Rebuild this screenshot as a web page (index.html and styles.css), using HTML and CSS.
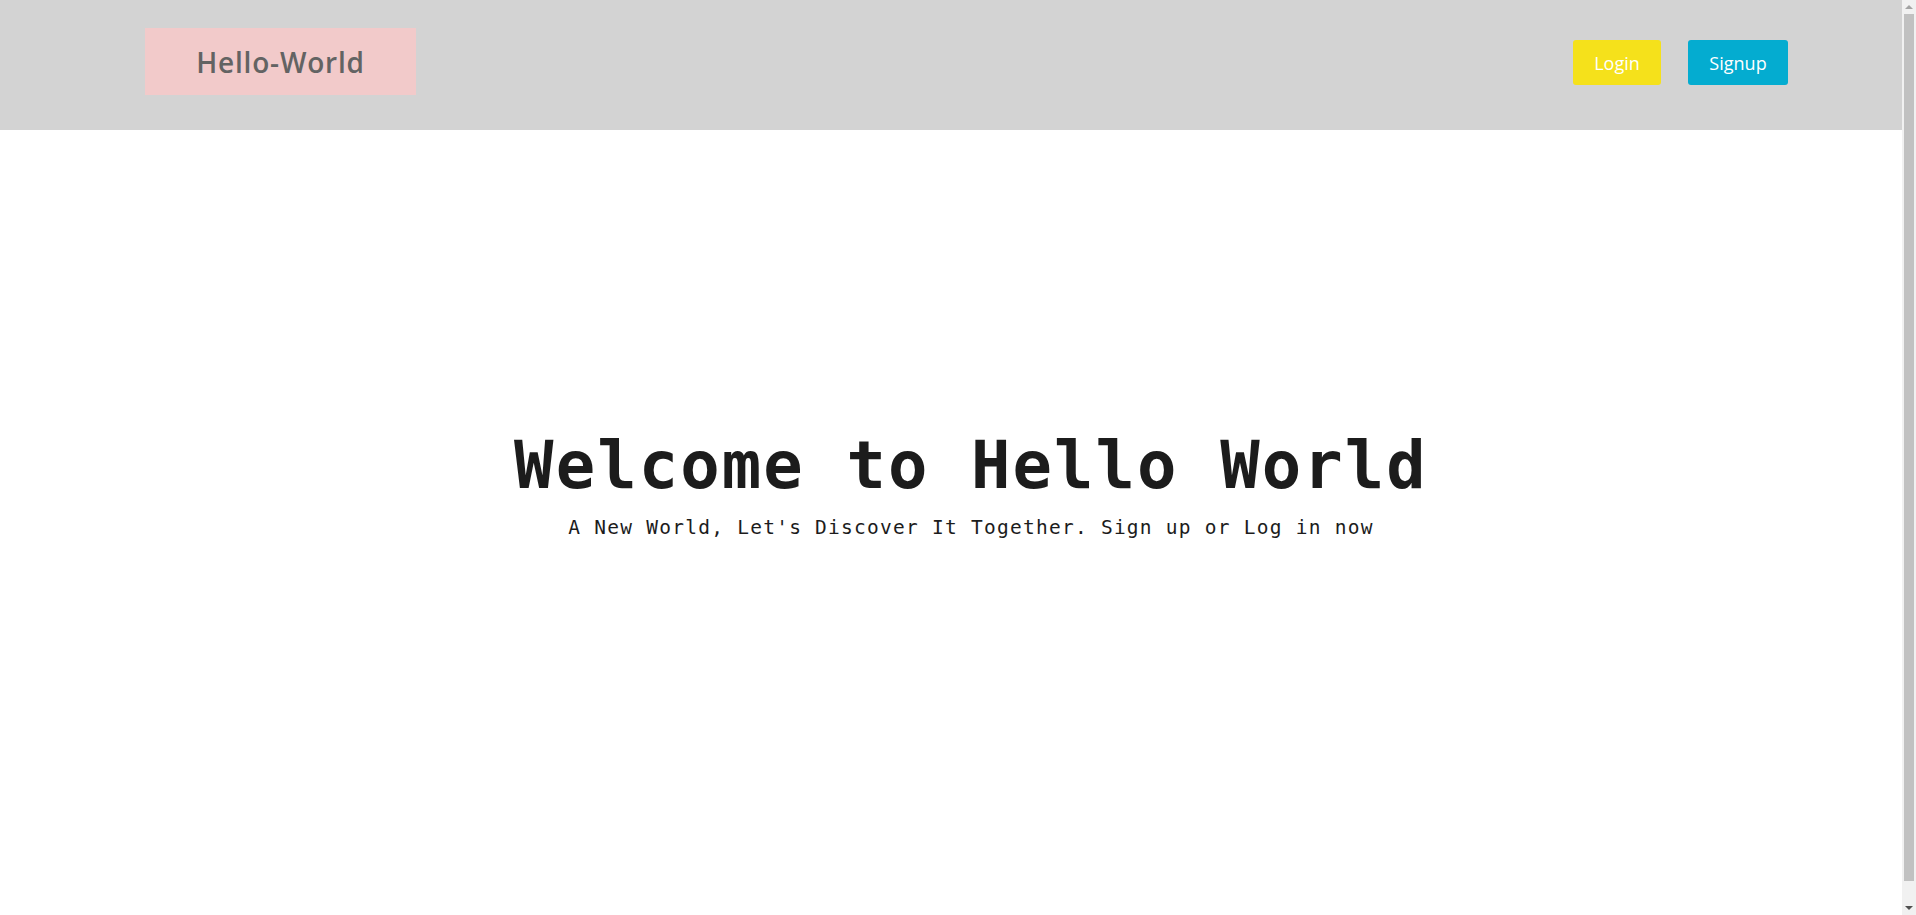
FILE: index.html
```html
<!DOCTYPE html>
<html lang="en">
<head>
<meta charset="utf-8">
<title>Hello-World</title>
<link rel="stylesheet" href="styles.css">
</head>
<body>
<div class="window">
  <div class="page">
    <header class="topbar">
      <div class="logo">Hello-World</div>
      <nav class="actions">
        <a class="btn btn-login" href="#">Login</a>
        <a class="btn btn-signup" href="#">Signup</a>
      </nav>
    </header>
    <main class="hero">
      <h1 class="hero-title">Welcome to Hello World</h1>
      <p class="hero-sub">A New World, Let's Discover It Together. Sign up or Log in now</p>
    </main>
  </div>
  <div class="scrollbar" aria-hidden="true">
    <div class="sb-arrow sb-up"></div>
    <div class="sb-track"><div class="sb-thumb"></div></div>
    <div class="sb-arrow sb-down"></div>
  </div>
</div>
</body>
</html>
```
FILE: styles.css
```css
html, body {
  margin: 0;
  padding: 0;
  overflow: hidden;
}
body {
  background: #ffffff;
  font-family: "Open Sans", "Liberation Sans", sans-serif;
}
.window {
  display: flex;
  height: 915px;
}
.page {
  flex: 1;
  min-width: 0;
}
.topbar {
  height: 130px;
  background: #d3d3d3;
  display: flex;
  align-items: flex-start;
  justify-content: space-between;
  padding: 28px 114px 0 145px;
  box-sizing: border-box;
}
.logo {
  width: 271px;
  height: 67px;
  background: #f2caca;
  color: #636363;
  font-family: "Open Sans", "Liberation Sans", sans-serif;
  font-weight: 600;
  font-size: 28px;
  letter-spacing: 0.8px;
  display: flex;
  align-items: center;
  justify-content: center;
}
.actions {
  display: flex;
  gap: 27px;
  margin-top: 12px;
}
.btn {
  display: flex;
  align-items: center;
  justify-content: center;
  height: 45px;
  border-radius: 3px;
  color: #ffffff;
  text-decoration: none;
  font-size: 18px;
}
.btn-login {
  width: 88px;
  background: #f5e11b;
}
.btn-signup {
  width: 100px;
  background: #04acd0;
}
.hero {
  display: flex;
  flex-direction: column;
  align-items: center;
  padding-top: 295px;
  padding-left: 40px;
  font-family: "DejaVu Sans Mono", "Liberation Mono", monospace;
  color: #1c1c1c;
}
.hero-title {
  margin: 0;
  font-size: 65.5px;
  font-weight: bold;
  line-height: 80px;
  letter-spacing: 2.1px;
}
.hero-sub {
  margin: 8px 0 0;
  font-size: 19.5px;
  line-height: 30px;
  letter-spacing: 1.25px;
}
.scrollbar {
  width: 14px;
  background: #f1f1f1;
  display: flex;
  flex-direction: column;
}
.sb-arrow {
  height: 14px;
  display: flex;
  align-items: center;
  justify-content: center;
}
.sb-up::before {
  content: "";
  border-left: 4px solid transparent;
  border-right: 4px solid transparent;
  border-bottom: 4px solid #a3a3a3;
}
.sb-down::before {
  content: "";
  border-left: 4px solid transparent;
  border-right: 4px solid transparent;
  border-top: 4px solid #505050;
}
.sb-track {
  flex: 1;
  display: flex;
  flex-direction: column;
  padding: 0 2px 20px;
}
.sb-thumb {
  flex: 1;
  background: #c1c1c1;
}
```
